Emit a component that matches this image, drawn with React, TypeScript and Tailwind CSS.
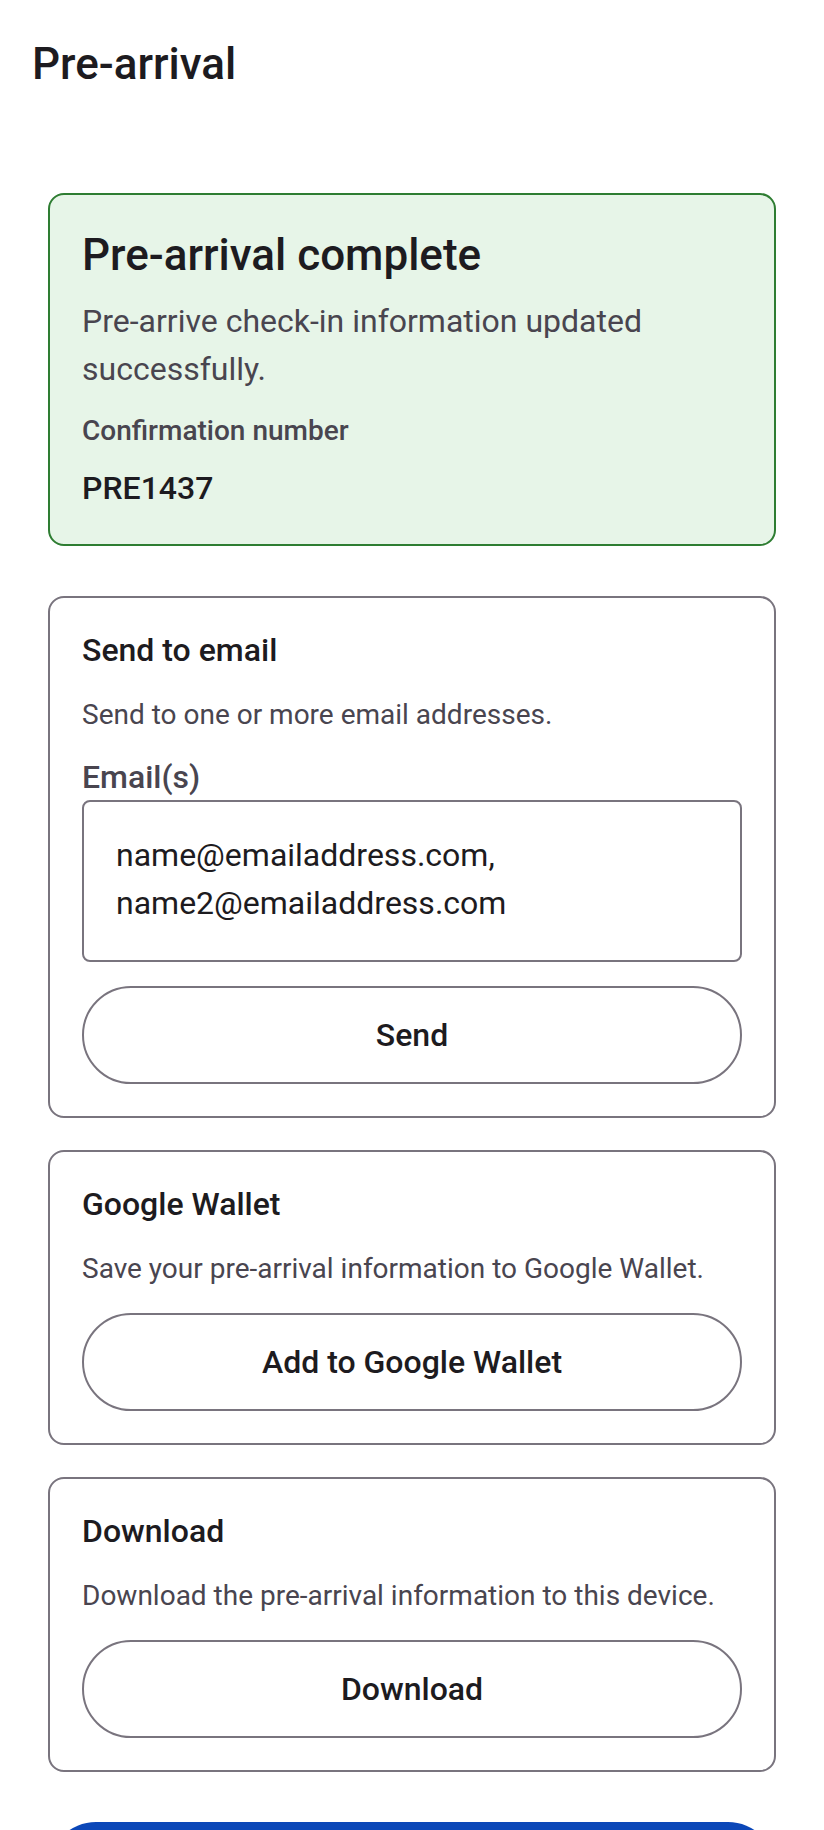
import type { ReactNode } from "react";

const FONT = "font-['Roboto','Noto_Sans',sans-serif]";

function OutlineButton({ children }: { children: ReactNode }) {
  return (
    <button
      type="button"
      className="mt-[24px] flex h-[98px] w-full items-center justify-center rounded-full border-2 border-[#79747e] bg-white text-[32px] font-medium leading-[40px] text-[#1d1b20]"
    >
      {children}
    </button>
  );
}

function ActionCard({
  title,
  description,
  children,
}: {
  title: string;
  description: string;
  children: ReactNode;
}) {
  return (
    <section className="rounded-[16px] border-2 border-[#79747e] bg-white px-[32px] py-[32px]">
      <h3 className="text-[32px] font-medium leading-[40px] text-[#1d1b20]">{title}</h3>
      <p className="mt-[25px] text-[28px] leading-[40px] text-[#49454f]">{description}</p>
      {children}
    </section>
  );
}

export default function App() {
  return (
    <div className={`${FONT} min-h-screen bg-white pb-[40px] pt-[36px]`}>
      <h1 className="px-[32px] text-[44px] font-medium leading-[56px] text-[#1d1b20]">
        Pre-arrival
      </h1>

      <main className="mt-[101px] flex flex-col px-[48px]">
        {/* success banner */}
        <section className="rounded-[16px] border-2 border-[#2e7d32] bg-[#e7f5e8] px-[32px] py-[32px]">
          <h2 className="text-[44px] font-medium leading-[56px] text-[#1d1b20]">
            Pre-arrival complete
          </h2>
          <p className="mt-[14px] text-[32px] leading-[48px] text-[#49454f]">
            Pre-arrive check-in information updated successfully.
          </p>
          <p className="mt-[18px] text-[28px] font-medium leading-[40px] text-[#49454f]">
            Confirmation number
          </p>
          <p className="mt-[13px] text-[32px] font-medium leading-[48px] text-[#1d1b20]">
            PRE1437
          </p>
        </section>

        <div className="mt-[50px]">
          <ActionCard title="Send to email" description="Send to one or more email addresses.">
            <label className="mt-[22px] block text-[32px] font-medium leading-[40px] text-[#49454f]">
              Email(s)
            </label>
            <div className="mt-[3px] rounded-[8px] border-2 border-[#79747e] px-[32px] pb-[33px] pt-[29px] text-[32px] leading-[48px] text-[#1d1b20]">
              name@emailaddress.com, name2@emailaddress.com
            </div>
            <div className="mt-[5px]">
              <OutlineButton>Send</OutlineButton>
            </div>
          </ActionCard>
        </div>

        <div className="mt-[32px]">
          <ActionCard
            title="Google Wallet"
            description="Save your pre-arrival information to Google Wallet."
          >
            <OutlineButton>Add to Google Wallet</OutlineButton>
          </ActionCard>
        </div>

        <div className="mt-[32px]">
          <ActionCard
            title="Download"
            description="Download the pre-arrival information to this device."
          >
            <OutlineButton>Download</OutlineButton>
          </ActionCard>
        </div>

        <button
          type="button"
          className="mt-[50px] flex h-[96px] w-full items-center justify-center rounded-full bg-[#0b47b8] text-[32px] font-medium leading-[40px] text-white"
        >
          Done
        </button>
      </main>
    </div>
  );
}
